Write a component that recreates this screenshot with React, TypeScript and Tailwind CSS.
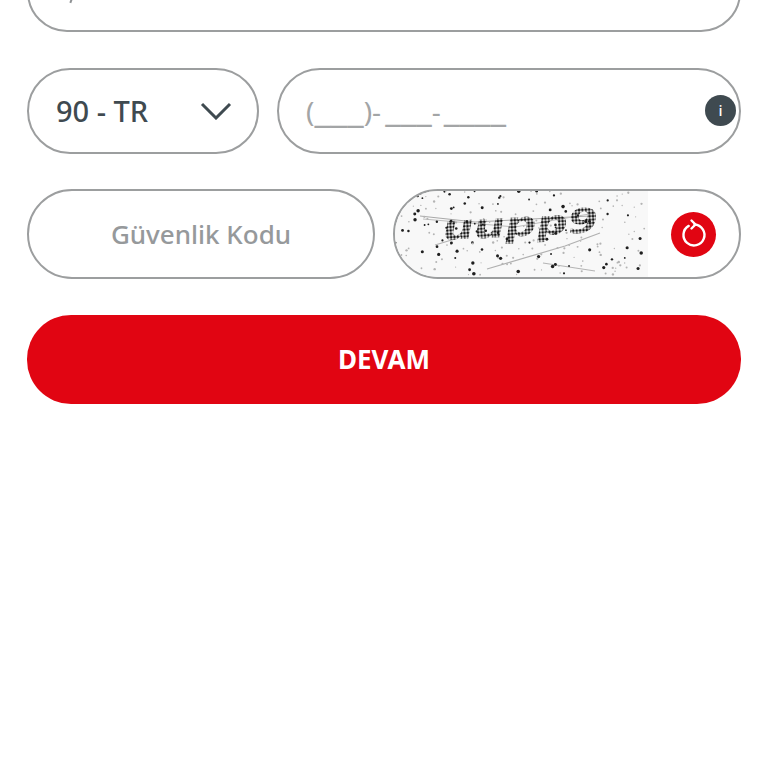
// captcha noise, fixed so every render draws the same picture
const specks: { x: number; y: number; r: number; c: string }[] = [];
let seed = 7;
const rnd = () => {
  seed = (seed * 16807) % 2147483647;
  return seed / 2147483647;
};
for (let i = 0; i < 230; i++) {
  const dark = rnd() < 0.45;
  specks.push({
    x: rnd() * 253,
    y: rnd() * 84,
    r: dark ? 0.9 + rnd() * 0.9 : 0.6 + rnd() * 0.6,
    c: dark ? '#1f1f1f' : '#b4b4b4',
  });
}

function Captcha() {
  return (
    <svg viewBox="0 0 253 86" className="h-[86px] w-[253px] shrink-0 blur-[0.5px]" aria-hidden="true">
      <defs>
        <pattern id="captcha-dots" width="3.4" height="3.4" patternUnits="userSpaceOnUse">
          <circle cx="1.7" cy="1.7" r="1.45" fill="#141414" />
        </pattern>
      </defs>
      <rect x="0" y="0" width="253" height="86" fill="#f8f8f8" />
      <path d="M25 25 L80 31 L195 25" stroke="#a9a9a9" strokeWidth="1" fill="none" />
      <path d="M28 28 L120 36 L200 22" stroke="#bdbdbd" strokeWidth="1" fill="none" />
      <path d="M92 78 L170 55 L205 42" stroke="#b0b0b0" strokeWidth="1.2" fill="none" />
      <path d="M148 72 L200 80" stroke="#b4b4b4" strokeWidth="1.2" fill="none" />
      <path d="M40 54 L60 48" stroke="#b4b4b4" strokeWidth="1.2" fill="none" />
      {specks.map((s, i) => (
        <circle key={i} cx={s.x} cy={s.y} r={s.r} fill={s.c} />
      ))}
      <text
        x="126"
        y="45"
        textAnchor="middle"
        fontFamily="'DejaVu Sans', sans-serif"
        fontWeight="700"
        fontStyle="italic"
        fontSize="34"
        fill="url(#captcha-dots)"
        textLength="156"
        lengthAdjust="spacingAndGlyphs"
        transform="rotate(-3 126 45)"
      >
        uupp9
      </text>
    </svg>
  );
}

export default function App() {
  return (
    <div className="h-[768px] overflow-hidden bg-white font-['Noto_Sans','Open_Sans',sans-serif]">
      <div className="flex flex-col gap-[35.5px] px-[27px]">
        {/* Name field, scrolled off the top */}
        <div className="relative mt-[-58px] h-[90px] rounded-[40px] border-2 border-[#9c9e9f] bg-white">
          <span className="absolute left-[41px] top-[55px] h-[4px] w-[2px] rotate-[20deg] bg-[#8e9193]" />
        </div>

        {/* Phone */}
        <div className="flex gap-[18px]">
          <div className="flex h-[86px] w-[232px] items-center justify-between rounded-[43px] border-2 border-[#9c9e9f] pl-[27px] pr-[25px]">
            <span className="text-[29px] font-medium leading-none text-[#3f4a50]">90 - TR</span>
            <svg viewBox="0 0 32 18" className="h-[18px] w-[32px]" fill="none" stroke="#3f4a50" strokeWidth="3">
              <path d="M2 2 L16 16 L30 2" />
            </svg>
          </div>
          <div className="relative flex h-[86px] flex-1 items-center rounded-[43px] border-2 border-[#9c9e9f] pl-[27px]">
            <span className="-mt-[6px] flex items-baseline text-[28px] leading-none text-[#a3a5a6]">
              (<span className="text-[37px] leading-none">___</span>)-
              <span className="ml-[4px] text-[35px] leading-none">___</span>-
              <span className="ml-[3px] text-[35px] leading-none">____</span>
            </span>
            <span className="absolute right-[3px] top-[25px] flex h-[31px] w-[31px] items-center justify-center rounded-full bg-[#3f4a50] text-[15px] font-medium leading-none text-white">
              i
            </span>
          </div>
        </div>

        {/* Captcha */}
        <div className="flex gap-[18px]">
          <div className="flex h-[90px] w-[348px] items-center justify-center rounded-[45px] border-2 border-[#9c9e9f]">
            <span className="text-[26px] font-medium leading-none text-[#96999b]">Güvenlik Kodu</span>
          </div>
          <div className="flex h-[90px] flex-1 items-center overflow-hidden rounded-[45px] border-2 border-[#9c9e9f]">
            <Captcha />
            <button className="ml-[23px] flex h-[45px] w-[45px] items-center justify-center rounded-full bg-[#e10512]">
              <svg viewBox="0 0 32 32" className="h-[32px] w-[32px]" fill="none" stroke="#fff" strokeWidth="2.4" strokeLinecap="round" strokeLinejoin="round">
                <path d="M10.7 7.9A10.5 10.5 0 1 0 16.5 6.5" />
                <path d="M13.5 2.5 L17.5 6.5 L13.5 10.5" />
              </svg>
            </button>
          </div>
        </div>

        <button className="flex h-[89px] items-center justify-center rounded-[44px] bg-[#e10512] text-[26px] font-bold text-white">
          DEVAM
        </button>
      </div>
    </div>
  );
}
